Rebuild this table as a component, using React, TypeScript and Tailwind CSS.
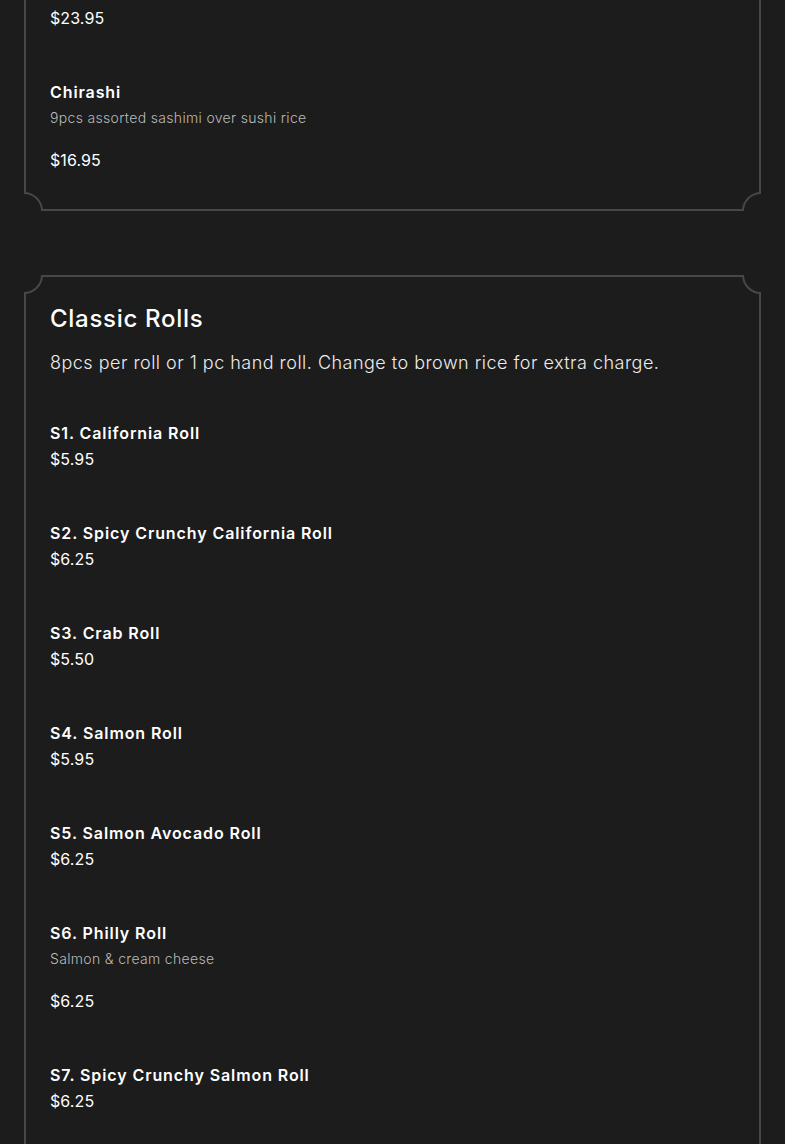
type MenuItem = {
  name?: string;
  description?: string;
  price: string;
};

type Section = {
  title?: string;
  subtitle?: string;
  items: MenuItem[];
  clipped?: boolean;
};

const sections: Section[] = [
  {
    clipped: true,
    items: [
      { price: "$23.95" },
      { name: "Chirashi", description: "9pcs assorted sashimi over sushi rice", price: "$16.95" },
    ],
  },
  {
    title: "Classic Rolls",
    subtitle: "8pcs per roll or 1 pc hand roll. Change to brown rice for extra charge.",
    items: [
      { name: "S1. California Roll", price: "$5.95" },
      { name: "S2. Spicy Crunchy California Roll", price: "$6.25" },
      { name: "S3. Crab Roll", price: "$5.50" },
      { name: "S4. Salmon Roll", price: "$5.95" },
      { name: "S5. Salmon Avocado Roll", price: "$6.25" },
      { name: "S6. Philly Roll", description: "Salmon & cream cheese", price: "$6.25" },
      { name: "S7. Spicy Crunchy Salmon Roll", price: "$6.25" },
      { name: "S8. Tuna Roll", price: "$5.95" },
    ],
  },
];

// concave corner cut: a circle centred on the card corner, clipped by the card
function Notch({ className }: { className: string }) {
  return (
    <span
      className={
        "pointer-events-none absolute h-[38px] w-[38px] rounded-full border-2 border-[#474747] bg-[#1c1c1c] " +
        className
      }
    />
  );
}

function MenuCard({ section }: { section: Section }) {
  return (
    <div
      className={
        "relative overflow-hidden px-[26px] pb-[38px] " +
        (section.clipped ? "pt-[5px]" : "pt-[28px]")
      }
    >
      <span
        className={
          "pointer-events-none absolute inset-0 border-2 border-[#474747] " +
          (section.clipped ? "border-t-0" : "")
        }
      />
      {section.clipped ? null : (
        <>
          <Notch className="-left-[19px] -top-[19px]" />
          <Notch className="-right-[19px] -top-[19px]" />
        </>
      )}
      <Notch className="-bottom-[19px] -left-[19px]" />
      <Notch className="-bottom-[19px] -right-[19px]" />

      <div className="relative">
        {section.title ? (
          <h2 className="text-[24px] font-medium leading-8 tracking-[0.7px] text-white">
            {section.title}
          </h2>
        ) : null}
        {section.subtitle ? (
          <p className="mt-[14px] mb-[43px] text-[18px] font-light leading-7 tracking-[0.48px] text-[#ededed]">
            {section.subtitle}
          </p>
        ) : null}

        <div className="flex flex-col gap-12">
          {section.items.map((item, index) => (
            <div key={item.name ?? index} className="flex flex-col">
              {item.name ? (
                <h3 className="text-[16px] font-semibold leading-[26px] tracking-[0.9px] text-white">
                  {item.name}
                </h3>
              ) : null}
              {item.description ? (
                <p className="mb-4 text-[14px] font-light leading-[26px] tracking-[0.33px] text-[#bababa]">
                  {item.description}
                </p>
              ) : null}
              <span className="text-[16px] leading-[26px] tracking-[0.1px] text-white">
                {item.price}
              </span>
            </div>
          ))}
        </div>
      </div>
    </div>
  );
}

export default function App() {
  return (
    <div
      className="min-h-screen bg-[#1c1c1c] px-6"
      style={{ fontFamily: "Inter, 'Noto Sans', sans-serif" }}
    >
      <div className="flex flex-col gap-16 pb-16">
        {sections.map((section, index) => (
          <MenuCard key={index} section={section} />
        ))}
      </div>
    </div>
  );
}
